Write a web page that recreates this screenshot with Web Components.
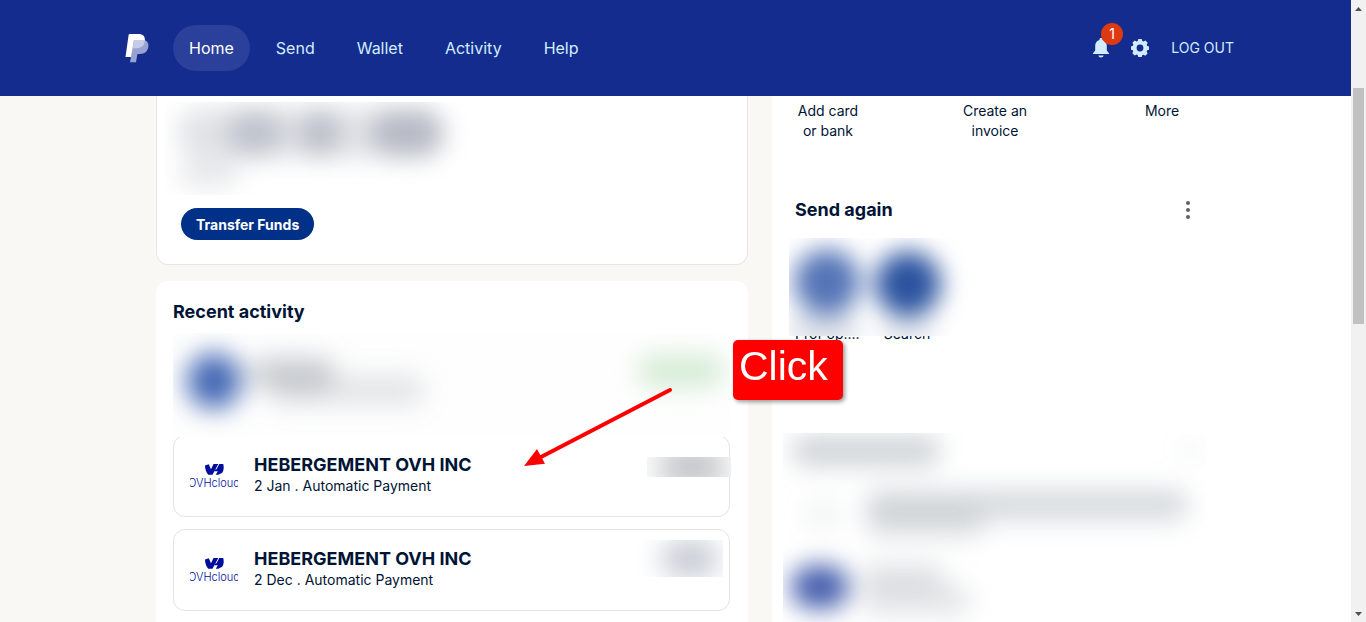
<!DOCTYPE html>
<html lang="en">
<head>
<meta charset="utf-8">
<meta name="viewport" content="width=device-width, initial-scale=1">
<title>PayPal: Summary</title>
<style>
    body{
        margin: 0;
        height: 100vh;
        overflow: hidden;
        background: #f9f8f5;
        color: #001435;
        font-family: Inter, "Liberation Sans", sans-serif;
        font-size: 14px;
        line-height: 20px;
    }
</style>
</head>
<body>
<pay-app></pay-app>

<script>
// blurred area: blobs = "x y w h color opacity; ..." in pixels of the patch
class PayBlur extends HTMLElement{
    constructor(){
        super();
        this.attachShadow({ mode: "open" });
    }
    connectedCallback(){
        let soft = this.getAttribute('soft') || 9;
        let rects = this.getAttribute('blobs').split(';').map((b)=>{
            let [x, y, w, h, color, op] = b.trim().split(/\s+/);
            return `<rect x="${x}" y="${y}" width="${w}" height="${h}" rx="${Math.min(w, h) / 2}" fill="${color}" opacity="${op}"/>`;
        }).join('');
        this.shadowRoot.innerHTML = `
        <style>
        :host{
            display: block;
            overflow: hidden;
        }
        svg{
            display: block;
            width: 100%;
            height: 100%;
        }
        </style>
        <svg aria-hidden="true">
          <defs><filter id="f" filterUnits="userSpaceOnUse" x="-60" y="-60" width="900" height="500" color-interpolation-filters="sRGB"><feGaussianBlur stdDeviation="${soft}"/></filter></defs>
          <g filter="url(#f)">${rects}</g>
        </svg>
        `;
    }
}
window.customElements.define("pay-blur", PayBlur);

class PayNavLink extends HTMLElement{
    constructor(){
        super();
        this.attachShadow({ mode: "open" });
    }
    connectedCallback(){
        this.shadowRoot.innerHTML = `
        <style>
        :host{
            display: block;
        }
        a{
            display: block;
            padding: 0 16px;
            border-radius: 23px;
            color: #d2ecff;
            font-size: 16px;
            line-height: 46px;
            text-decoration: none;
        }
        :host([active]) a{
            background: #2a409b;
            color: #fff;
        }
        </style>
        <a href="#"><slot></slot></a>
        `;
    }
}
window.customElements.define("pay-nav-link", PayNavLink);

class PayHeader extends HTMLElement{
    constructor(){
        super();
        this.attachShadow({ mode: "open" });
        this.shadowRoot.innerHTML = `
        <style>
        :host{
            display: block;
            background: #142c8e;
        }
        header{
            display: flex;
            align-items: center;
            height: 96px;
            padding: 0 117px 0 125px;
        }
        svg{
            display: block;
        }
        nav{
            display: flex;
            gap: 10px;
            margin-left: 24px;
        }
        .actions{
            display: flex;
            align-items: center;
            gap: 22px;
            margin-left: auto;
        }
        button{
            position: relative;
            padding: 0;
            border: 0;
            background: none;
            color: #d2ecff;
        }
        .badge{
            position: absolute;
            left: 8px;
            top: -15px;
            width: 22px;
            border-radius: 11px;
            background: #dd3a12;
            color: #fff;
            font: 14px/22px Inter, sans-serif;
            text-align: center;
        }
        .out{
            color: #d2ecff;
            text-decoration: none;
        }
        </style>
        <header>
          <svg width="24" height="29" viewBox="0 0 24 29" role="img" aria-label="PayPal">
            <path fill="#fff" d="M4.500 0h9c4.500 0 7 2.400 6.300 7-.8 4.900-4 7.300-8.700 7.300H8.300L7 23H.5L3.600 1c.1-.6.4-1 .9-1z"/>
            <path fill="#98a3d2" d="M9.700 6h9.600c3.300 1 4.600 3.400 4 7.100-.8 4.600-3.900 6.900-8.200 6.900h-2.700L11 28.300H5L8.700 7c.1-.6.4-1 1-1z"/>
            <path fill="#c6cce8" d="M9.700 6h10.200c0 5.300-3.500 8.300-8.800 8.300H8.300L7.200 20 8.700 7c.1-.6.4-1 1-1z"/>
          </svg>
          <nav>
            <pay-nav-link active>Home</pay-nav-link>
            <pay-nav-link>Send</pay-nav-link>
            <pay-nav-link>Wallet</pay-nav-link>
            <pay-nav-link>Activity</pay-nav-link>
            <pay-nav-link>Help</pay-nav-link>
          </nav>
          <div class="actions">
            <button aria-label="Notifications">
              <svg width="16" height="20" viewBox="0 0 16 20" fill="currentColor"><path d="M8 0c.9 0 1.500.6 1.500 1.400v.7c2.600.7 4.300 3 4.300 5.700v4.600L16 15.200V16H0v-.8l2.200-2.800V7.800c0-2.700 1.700-5 4.300-5.700v-.7C6.500.6 7.100 0 8 0zM5.300 17.500h5.400c-.3 1.300-1.400 2-2.700 2s-2.400-.7-2.700-2z"/></svg>
              <span class="badge">1</span>
            </button>
            <button aria-label="Settings">
              <svg width="18" height="18" viewBox="0 0 18 18" fill="currentColor"><path fill-rule="evenodd" d="M7.300 0h3.400l.6 2 1.200.5 1.900-1 2.300 2.300-1 1.900.5 1.200 1.800.5v3.300l-1.900.6-.5 1.200 1 1.900-2.300 2.300-1.900-1-1.200.5-.5 1.800H7.300l-.6-1.900-1.200-.5-1.900 1-2.300-2.300 1-1.900-.5-1.200L0 10.700V7.400l1.900-.6.500-1.200-1-1.900 2.300-2.300 1.900 1L6.800 2zM9 5.600a3.400 3.400 0 1 0 0 6.800 3.400 3.400 0 0 0 0-6.800z"/></svg>
            </button>
            <a class="out" href="#">LOG OUT</a>
          </div>
        </header>
        `;
    }
}
window.customElements.define("pay-header", PayHeader);

class PayCard extends HTMLElement{
    constructor(){
        super();
        this.attachShadow({ mode: "open" });
        this.shadowRoot.innerHTML = `
        <style>
        :host{
            display: block;
            position: relative;
            border: 1px solid transparent;
            border-radius: 12px 12px 0 0;
            background: #fff;
        }
        :host([outlined]){
            border-color: #e6e6e6;
            border-top: 0;
            border-radius: 0 0 12px 12px;
        }
        </style>
        <slot></slot>
        `;
    }
}
window.customElements.define("pay-card", PayCard);

class PayTransaction extends HTMLElement{
    constructor(){
        super();
        this.attachShadow({ mode: "open" });
        this.shadowRoot.innerHTML = `
        <style>
        :host{
            display: flex;
            align-items: center;
            gap: 16px;
            position: relative;
            box-sizing: border-box;
            height: 82px;
            padding: 0 16px 2px;
            border: 1px solid #e3e4e6;
            border-radius: 12px;
            background: #fff;
        }
        .logo{
            display: flex;
            flex-direction: column;
            align-items: center;
            gap: 1px;
            width: 48px;
            padding-top: 4px;
            overflow: hidden;
            color: #000e9c;
            font: 300 11px/14px Inter, sans-serif;
        }
        h3{
            margin: 0;
            font-size: 18px;
            line-height: 22px;
            font-weight: 700;
        }
        p{
            margin: 0;
            line-height: 20px;
        }
        </style>
        <div class="logo">
          <svg width="19" height="11" viewBox="0 0 19 11" fill="currentColor" aria-hidden="true">
            <path d="M0 1.500L3.800.2l2.200 5L8.500 0h4.800L7.500 10.800H3.200C1.200 8.500 0 5 0 1.500z"/>
            <path d="M14.300 0h3.900c1 3.500.4 6.500-1 8.800l-3.900 2h-2.500l2-3.600H9.300l1.200-1.900h1z"/>
          </svg>
          <span>OVHcloud</span>
        </div>
        <div>
          <h3><slot name="title"></slot></h3>
          <p><slot></slot></p>
        </div>
        <slot name="amount"></slot>
        `;
    }
}
window.customElements.define("pay-transaction", PayTransaction);

// red callout with its arrow, laid over the cards
class PayCallout extends HTMLElement{
    constructor(){
        super();
        this.attachShadow({ mode: "open" });
        this.shadowRoot.innerHTML = `
        <style>
        :host{
            display: block;
            color: #fff;
            font: 41px/52px "Liberation Sans", Arial, sans-serif;
        }
        .box{
            box-sizing: border-box;
            width: 110px;
            height: 60px;
            margin-left: auto;
            padding-left: 6px;
            border-radius: 5px;
            background: #f00;
            box-shadow: 2px 2px 4px rgba(0, 0, 0, .4);
        }
        svg{
            display: block;
            margin-top: -14px;
        }
        </style>
        <div class="box"><slot></slot></div>
        <svg width="150" height="84" viewBox="0 0 150 84" aria-hidden="true">
          <path d="M146 4L16 71.500" stroke="#f00" stroke-width="4" stroke-linecap="round"/>
          <path d="M0 80l13-17 8 14.800z" fill="#f00"/>
        </svg>
        `;
    }
}
window.customElements.define("pay-callout", PayCallout);

class PayScrollbar extends HTMLElement{
    constructor(){
        super();
        this.attachShadow({ mode: "open" });
        this.shadowRoot.innerHTML = `
        <style>
        :host{
            display: grid;
            grid-template-rows: 17px 71fr 236fr 281fr 17px;
            justify-items: center;
            align-items: center;
            background: #f1f1f1;
        }
        .thumb{
            grid-row: 3;
            width: 11px;
            height: 100%;
            background: #c1c1c1;
        }
        .down{
            grid-row: 5;
        }
        </style>
        <svg width="7" height="4" aria-hidden="true"><path d="M0 4l3.500-4L7 4z" fill="#505050"/></svg>
        <div class="thumb"></div>
        <svg class="down" width="7" height="4" aria-hidden="true"><path d="M0 0l3.500 4L7 0z" fill="#505050"/></svg>
        `;
    }
}
window.customElements.define("pay-scrollbar", PayScrollbar);

class PayApp extends HTMLElement{
    constructor(){
        super();
        this.attachShadow({ mode: "open" });
        this.shadowRoot.innerHTML = `
        <style>
        :host{
            display: grid;
            grid-template-columns: minmax(0, 1fr) 15px;
            height: 100vh;
            overflow: hidden;
        }
        .page{
            display: flex;
            flex-direction: column;
            min-height: 0;
        }
        main{
            display: grid;
            grid-template-columns: 4fr 3fr;
            flex: 1;
            min-height: 0;
        }
        .left{
            display: flex;
            flex-direction: column;
            gap: 16px;
            padding: 0 24px 0 156px;
        }
        .right{
            padding: 0 156px 0 23px;
            background: #fff;
        }
        h2{
            margin: 0;
            font-size: 18px;
            line-height: 26px;
            font-weight: 700;
        }
        button{
            border: 0;
            font-family: inherit;
        }
        .balance{
            padding: 6px 24px 24px;
        }
        .balance pay-blur{
            height: 93px;
            margin: 0 0 13px -16px;
        }
        .transfer{
            display: block;
            height: 32px;
            padding: 0 15px;
            border-radius: 16px;
            background: #003087;
            color: #fff;
            font-size: 14px;
            font-weight: 700;
        }
        .activity{
            flex: 1;
            padding: 17px 17px 0 16px;
        }
        .latest{
            position: relative;
            z-index: 1;
            height: 104px;
            margin: 8px 0 -2px;
            background: #fefefe;
        }
        .list{
            display: flex;
            flex-direction: column;
            gap: 12px;
        }
        .amount{
            position: absolute;
            background: #fcfcfc;
        }
        .amount.first{
            right: -2px;
            top: 21px;
            width: 84px;
            height: 20px;
        }
        .amount.second{
            right: 6px;
            top: 10px;
            width: 90px;
            height: 37px;
            background: #fff;
        }
        pay-callout{
            position: absolute;
            z-index: 2;
            right: -96px;
            top: 58px;
            width: 319px;
        }
        .shortcuts{
            display: flex;
            justify-content: space-between;
            height: 96px;
            padding-top: 5px;
        }
        .shortcuts a{
            width: 66px;
            color: inherit;
            text-align: center;
            text-decoration: none;
        }
        .row{
            display: flex;
            align-items: center;
            justify-content: space-between;
        }
        .dots{
            display: block;
            padding: 0 5px;
            background: none;
        }
        .dots svg{
            display: block;
        }
        .people{
            position: relative;
            z-index: 1;
            width: 180px;
            height: 98px;
            margin: 15px 0 0 -6px;
            background: #fff;
        }
        .names{
            display: flex;
            gap: 16px;
            margin-top: -12px;
        }
        .names span{
            width: 64px;
            text-align: center;
            white-space: nowrap;
        }
        .more{
            height: 190px;
            margin: 89px -12px 0;
        }
        </style>
        <div class="page">
          <pay-header></pay-header>
          <main>
            <div class="left">
              <pay-card outlined class="balance">
                <pay-blur soft="12" blobs="12 6 268 50 #6b7380 .2; 62 8 56 46 #5c6480 .26; 134 8 42 46 #5c6480 .28; 206 8 72 46 #5c6480 .32; 14 56 60 30 #6b7380 .15"></pay-blur>
                <button class="transfer">Transfer Funds</button>
              </pay-card>
              <pay-card class="activity">
                <h2>Recent activity</h2>
                <pay-blur class="latest" soft="13" blobs="14 20 54 56 #4468b4 1; 76 24 86 32 #66707c .32; 96 42 156 30 #66707c .18; 464 22 88 32 #8acb8a .36"></pay-blur>
                <div class="list">
                  <pay-transaction>
                    <span slot="title">HEBERGEMENT OVH INC</span>
                    2 Jan . Automatic Payment
                    <pay-blur slot="amount" class="amount first" soft="14" blobs="12 -10 66 40 #5a6068 .36"></pay-blur>
                  </pay-transaction>
                  <pay-transaction>
                    <span slot="title">HEBERGEMENT OVH INC</span>
                    2 Dec . Automatic Payment
                    <pay-blur slot="amount" class="amount second" soft="13" blobs="28 0 58 38 #56627c .32"></pay-blur>
                  </pay-transaction>
                </div>
                <pay-callout>Click</pay-callout>
              </pay-card>
            </div>
            <div class="right">
              <div class="shortcuts">
                <a href="#">Add card or bank</a>
                <a href="#">Create an invoice</a>
                <a href="#">More</a>
              </div>
              <div class="row">
                <h2>Send again</h2>
                <button class="dots" aria-label="More options"><svg width="4" height="18" viewBox="0 0 4 18" fill="#5f6165"><circle cx="2" cy="2" r="2"/><circle cx="2" cy="9" r="2"/><circle cx="2" cy="16" r="2"/></svg></button>
              </div>
              <div>
                <pay-blur class="people" soft="12" blobs="5 11 66 66 #5474b6 1; 86 13 66 66 #2b539f 1; 0 76 70 30 #566a90 .22; 92 80 54 26 #566a90 .16"></pay-blur>
                <div class="names"><span>Prof op....</span><span>Search</span></div>
              </div>
              <pay-blur class="more" soft="12" blobs="8 2 150 32 #6a7682 .3; 20 66 40 30 #6a7682 .08; 82 56 324 32 #6a7682 .26; 82 76 120 30 #6a7682 .18; 8 132 58 44 #4a62ae 1; 78 130 84 28 #6a7682 .2; 78 152 110 30 #6a7682 .18; 394 8 28 20 #6a7682 .05"></pay-blur>
            </div>
          </main>
        </div>
        <pay-scrollbar></pay-scrollbar>
        `;
    }
}
window.customElements.define("pay-app", PayApp);
</script>
</body>
</html>
